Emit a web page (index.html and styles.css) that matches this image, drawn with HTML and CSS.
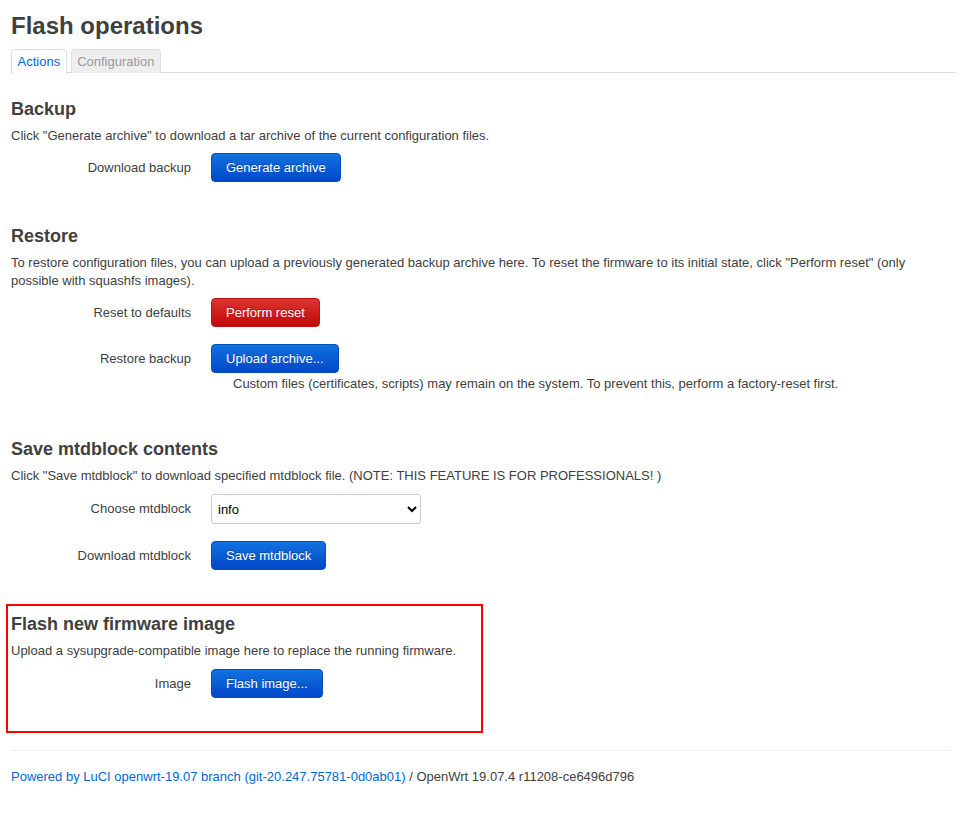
FILE: index.html
```html
<!DOCTYPE html>
<html>
<head>
<meta charset="utf-8">
<title>Flash operations</title>
<link rel="stylesheet" href="styles.css">
</head>
<body>
<div class="main">
  <h2 class="page-title">Flash operations</h2>
  <ul class="tabs">
    <li class="tab active">Actions</li>
    <li class="tab">Configuration</li>
  </ul>

  <section class="cbi-section backup">
    <h3>Backup</h3>
    <p class="desc">Click "Generate archive" to download a tar archive of the current configuration files.</p>
    <div class="row">
      <label class="lbl">Download backup</label>
      <div class="field"><button class="btn blue">Generate archive</button></div>
    </div>
  </section>

  <section class="cbi-section restore">
    <h3>Restore</h3>
    <p class="desc">To restore configuration files, you can upload a previously generated backup archive here. To reset the firmware to its initial state, click "Perform reset" (only possible with squashfs images).</p>
    <div class="row">
      <label class="lbl">Reset to defaults</label>
      <div class="field"><button class="btn red">Perform reset</button></div>
    </div>
    <div class="row">
      <label class="lbl">Restore backup</label>
      <div class="field"><button class="btn blue">Upload archive...</button>
        <div class="note">Custom files (certificates, scripts) may remain on the system. To prevent this, perform a factory-reset first.</div>
      </div>
    </div>
  </section>

  <section class="cbi-section mtd">
    <h3>Save mtdblock contents</h3>
    <p class="desc">Click "Save mtdblock" to download specified mtdblock file. (NOTE: THIS FEATURE IS FOR PROFESSIONALS! )</p>
    <div class="row sel-row">
      <label class="lbl sel-lbl">Choose mtdblock</label>
      <div class="field"><select class="sel"><option>info</option></select></div>
    </div>
    <div class="row">
      <label class="lbl">Download mtdblock</label>
      <div class="field"><button class="btn blue">Save mtdblock</button></div>
    </div>
  </section>

  <section class="cbi-section flash">
    <h3>Flash new firmware image</h3>
    <p class="desc">Upload a sysupgrade-compatible image here to replace the running firmware.</p>
    <div class="row">
      <label class="lbl">Image</label>
      <div class="field"><button class="btn blue">Flash image...</button></div>
    </div>
  </section>

  <footer class="footer">
    <a class="flink">Powered by LuCI openwrt-19.07 branch (git-20.247.75781-0d0ab01)</a> / OpenWrt 19.07.4 r11208-ce6496d796
  </footer>
</div>
</body>
</html>
```
FILE: styles.css
```css
html, body { margin: 0; padding: 0; background: #fff; }
body {
  font-family: "Liberation Sans", Arial, sans-serif;
  font-size: 13px;
  line-height: 18px;
  color: #404040;
}
.main { padding: 0 15px 0 11px; }
.page-title {
  margin: 0;
  padding-top: 12px;
  font-size: 24px;
  line-height: 28px;
  font-weight: bold;
  color: #404040;
}
.tabs {
  list-style: none;
  margin: 9px -5px 0 0;
  padding: 0;
  display: flex;
  gap: 4px;
  border-bottom: 1px solid #ddd;
  height: 23px;
}
.tab {
  padding: 0 5.5px;
  height: 23px;
  line-height: 24px;
  border: 1px solid #ddd;
  border-bottom: none;
  border-radius: 4px 4px 0 0;
  background: #eee;
  color: #999;
}
.tab.active {
  background: #fff;
  color: #0069d6;
  height: 24px;
  margin-bottom: -1px;
}
.cbi-section h3 {
  margin: 0;
  font-size: 18px;
  line-height: 22px;
  font-weight: bold;
  color: #404040;
}
.cbi-section .desc { margin: 7px 0 0; }
.backup { margin-top: 25px; }
.restore { margin-top: 43px; }
.mtd { margin-top: 45px; }
.row { display: flex; align-items: flex-start; margin-top: 8px; }
.cbi-section .row + .row { margin-top: 17px; }
.mtd .sel-row { margin-top: 9px; }
.mtd .row + .row { margin-top: 17px; }
.lbl {
  width: 180px;
  text-align: right;
  line-height: 29px;
  flex: none;
}
.sel-lbl { line-height: 30px; }
.field { margin-left: 20px; }
.btn {
  font-family: "Liberation Sans", Arial, sans-serif;
  font-size: 13px;
  height: 29px;
  padding: 0 14px;
  border-radius: 4px;
  color: #fff;
  cursor: pointer;
  text-shadow: 0 -1px 0 rgba(0,0,0,0.25);
}
.btn.blue {
  background: linear-gradient(#1271e0, #0048c8);
  border: 1px solid #0050b8;
}
.btn.red {
  background: linear-gradient(#dd3333, #c20808);
  border: 1px solid #bb1111;
}
.note { margin-left: 22px; margin-top: 2px; }
.sel {
  width: 210px;
  height: 30px;
  font-family: "Liberation Sans", Arial, sans-serif;
  font-size: 13px;
  color: #000;
  border: 1px solid #ccc;
  border-radius: 3px;
  background: #fff;
  padding: 0 2px;
}
.flash {
  margin: 34px 0 0 -5px;
  width: 470px;
  border: 2px solid #ff0000;
  padding: 7px 0 33px 3px;
}
.flash .row { margin-top: 9px; }
.footer {
  margin-top: 17px;
  border-top: 1px solid #eee;
  padding-top: 17px;
  color: #404040;
}
.flink { color: #0069d6; text-decoration: none; }
```
